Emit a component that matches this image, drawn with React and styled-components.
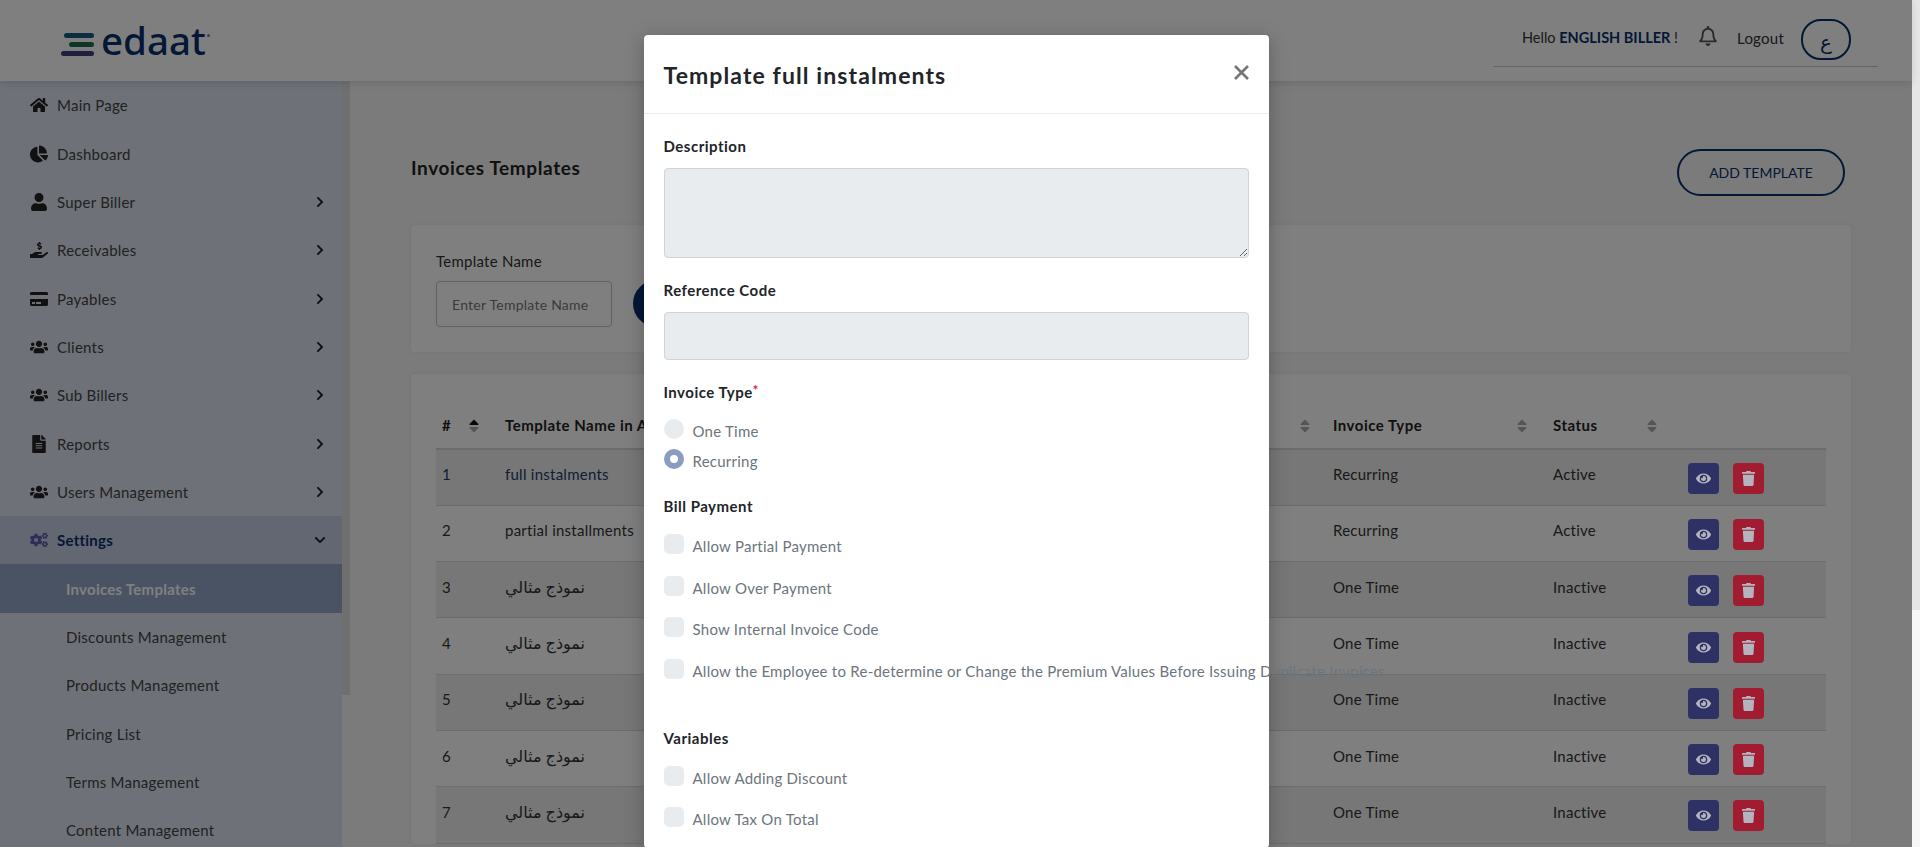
import React from "react";
import styled, { createGlobalStyle } from "styled-components";
import {
  FaHome, FaChartPie, FaUser, FaHandHoldingUsd, FaCreditCard, FaUsers, FaFileAlt, FaCogs,
  FaChevronRight, FaChevronDown, FaEye, FaTrash, FaSortUp, FaSortDown, FaRegBell,
} from "react-icons/fa";

const FONT = `"Lato", "DejaVu Sans", sans-serif`;

const Global = createGlobalStyle`
  html, body { margin: 0; padding: 0; height: 100%; overflow: hidden; background: #fff; }
  body { font-family: ${FONT}; font-size: 15px; letter-spacing: .25px; color: #212529; }
  * { box-sizing: border-box; }
`;

const Root = styled.div`display: flex; height: 847px; overflow: hidden;`;
const PageArea = styled.div`position: relative; flex: 1; min-width: 0; display: flex; flex-direction: column; background: #f6f6f6;`;
const PageScroll = styled.div`width: 8px; background: #f7f7f7; flex: none;`;
const PageThumb = styled.div`height: 610px; background: #e6e6e6;`;

const Header = styled.header`height: 81px; flex: none; background: #fff; box-shadow: 0 2px 8px rgba(0,0,0,.12); display: flex; justify-content: space-between; position: relative; z-index: 2;`;
const Logo = styled.div`display: flex; align-items: flex-start; padding: 0 0 0 61px; position: relative;`;
const LogoMark = styled.svg`width: 34px; height: 24px; margin-top: 33px; flex: none;`;
const LogoWord = styled.span`font-family: "Noto Sans", sans-serif; font-size: 38.5px; font-weight: 500; line-height: 48px; margin: 16px 0 0 6px; color: #0a2f6c; letter-spacing: 0;`;
const LogoDot = styled.span`width: 3px; height: 3px; border-radius: 50%; background: #6d84a8; margin: 34px 0 0 1px;`;
const UserBar = styled.div`width: 385px; height: 67px; margin-right: 34px; padding-left: 29px; border-bottom: 1px solid #c9c9c9; display: flex; align-items: flex-start; color: #333;`;
const Hello = styled.span`margin-top: 29px; line-height: 18px; font-size: 14.5px; letter-spacing: 0;`;
const Strong = styled.b`color: #0a2f6c; font-weight: 700;`;
const BellWrap = styled.span`margin: 26px 0 0 20px; font-size: 20px; line-height: 20px; color: #555;`;
const Logout = styled.span`margin: 29px 0 0 19px; line-height: 18px;`;
const Lang = styled.span`width: 50px; height: 41px; border: 2px solid #0a2f6c; border-radius: 20px; margin: 19px 0 0 17px; display: flex; align-items: center; justify-content: center; color: #0a2f6c; font-size: 20px; padding-top: 4px;`;

const Body = styled.div`display: flex; flex: 1; min-height: 0;`;
const SideWrap = styled.div`width: 350px; flex: none; display: flex;`;
const Sidebar = styled.nav`width: 342px; background: #dde2f0; overflow: hidden;`;
const SideScroll = styled.div`width: 8px; background: #f6f6f6;`;
const SideThumb = styled.div`height: 614px; background: #dedede;`;
const Item = styled.div`
  height: 48.35px; display: flex; align-items: center; padding-left: ${p => (p.$sub ? 66 : 30)}px; padding-right: 16px;
  background: ${p => (p.$active ? "#94a6c6" : p.$open ? "#c6cee2" : "transparent")};
  color: ${p => (p.$active ? "#fff" : p.$open ? "#0a2f6c" : "#444")};
  font-weight: ${p => (p.$active || p.$open ? 700 : 400)};
`;
const ItemIcon = styled.span`width: 27px; flex: none; font-size: 18px; line-height: 0; color: ${p => (p.$open ? "#5a5fb0" : "#222")};`;
const ItemText = styled.span`flex: 1;`;
const Caret = styled.span`font-size: 12px; line-height: 0; color: #222;`;

const Main = styled.main`flex: 1; min-width: 0; padding: 68px 61px 0;`;
const TitleRow = styled.div`display: flex; justify-content: space-between; align-items: flex-start; margin-bottom: 29px;`;
const PageTitle = styled.h1`margin: 8px 0 0; font-size: 19px; line-height: 22px; font-weight: 700; color: #222; letter-spacing: .6px;`;
const AddBtn = styled.button`width: 168px; height: 47px; border: 2px solid #0a2f6c; border-radius: 24px; background: none; color: #0a2f6c; font: 400 14px ${FONT}; margin-right: 6px;`;
const Card = styled.section`background: #fff; border-radius: 4px; box-shadow: 0 0 4px rgba(0,0,0,.06); padding: ${p => p.$pad}; margin-top: ${p => p.$mt || 0}px;`;
const SearchRow = styled.div`display: flex; align-items: flex-end; gap: 21px;`;
const Field = styled.div`display: flex; flex-direction: column;`;
const FilterLabel = styled.label`line-height: 18px; margin-bottom: 11px; color: #333;`;
const FilterInput = styled.div`width: 176px; height: 46px; border: 1px solid #c4c4c4; border-radius: 4px; padding: 0 15px; display: flex; align-items: center; color: #777; font-size: 14px;`;
const SearchBtn = styled.div`width: 150px; height: 47px; border-radius: 24px; background: #0a2f6c;`;

const Table = styled.table`width: 100%; border-collapse: collapse; table-layout: fixed;`;
const Th = styled.th`height: 57px; padding: 10px 6px 0; text-align: left; font-weight: 700; font-size: 15px; letter-spacing: .5px; color: #222; border-bottom: 2px solid #d6d6d6; white-space: nowrap; overflow: hidden;`;
const ThInner = styled.div`display: flex; justify-content: space-between; align-items: center; padding-right: ${p => p.$pr || 14}px;`;
const Sort = styled.span`position: relative; width: 12px; height: 16px; flex: none; display: block; font-size: 16px; color: #aaa;`;
const SortPart = styled.span`position: absolute; left: 1px; top: 1px; line-height: 0; color: ${p => (p.$dark ? "#111" : "inherit")};`;
const Tr = styled.tr`height: 56.3px; background: ${p => (p.$odd ? "#eee" : "transparent")};`;
const Td = styled.td`padding: 0 6px 6px; border-bottom: 1px solid #d8d8d8; color: ${p => (p.$navy ? "#1c3d6c" : "#333")}; white-space: nowrap; overflow: hidden;`;
const ArabicText = styled.span`font-size: 16px; letter-spacing: 0;`;
const Actions = styled.td`padding: 2px 0 0 11px; border-bottom: 1px solid #d8d8d8;`;
const ActionRow = styled.div`display: flex; gap: 14px;`;
const ActionBtn = styled.span`position: relative; z-index: 11; width: 31px; height: 31px; border-radius: 4px; display: flex; align-items: center; justify-content: center; font-size: 15px; color: #b4b4c0; background: ${p => (p.$danger ? "#a11c31" : "#2e3163")};`;

const Overlay = styled.div`position: absolute; inset: 0; background: rgba(0,0,0,.5); z-index: 10; overflow: hidden;`;
const Modal = styled.div`width: 625px; margin: 35px auto 0; background: #fff; border-radius: 4px; box-shadow: 0 4px 20px rgba(0,0,0,.25);`;
const ModalHead = styled.div`height: 79px; padding: 0 20px; border-bottom: 1px solid #e9ecef; display: flex; justify-content: space-between; align-items: flex-start;`;
const ModalTitle = styled.h2`margin: 27px 0 0; font-size: 23px; line-height: 26px; font-weight: 700; letter-spacing: 1.1px; color: #212529;`;
const CloseIcon = styled.svg`width: 15px; height: 15px; margin-top: 30px; stroke: #777; stroke-width: 2.6;`;
const ModalBody = styled.div`padding: 23px 20px 0;`;
const Label = styled.div`font-weight: 700; font-size: 15px; line-height: 18px; letter-spacing: .5px; color: #212529; margin: ${p => p.$m || "0"};`;
const Req = styled.span`color: #e3142c; font-size: 13px; line-height: 0; position: relative; top: -3px;`;
const TextArea = styled.textarea`display: block; width: 100%; height: 90px; margin: 13px 0 0; background: #e9ecef; border: 1px solid #ced4da; border-radius: 4px; resize: vertical; outline: none;`;
const TextInput = styled.div`height: 48px; margin-top: 13px; background: #e9ecef; border: 1px solid #ced4da; border-radius: 4px;`;
const Check = styled.div`display: flex; align-items: flex-start; height: ${p => p.$h}px; white-space: nowrap; color: #6c757d;`;
const Box = styled.span`
  width: 20px; height: 20px; flex: none; margin-right: 9px; background: ${p => (p.$on ? "#8a9cc0" : "#e9ecef")};
  border-radius: ${p => (p.$round ? "50%" : "5px")};
  display: flex; align-items: center; justify-content: center;
`;
const Dot = styled.span`width: 8px; height: 8px; border-radius: 50%; background: #fff;`;
const CheckText = styled.span`line-height: 18px; margin-top: ${p => p.$mt || 3}px;`;

const Arabic = "نموذج مثالي";
const rows = [
  [1, "full instalments", "Recurring", "Active"],
  [2, "partial installments", "Recurring", "Active"],
  [3, Arabic, "One Time", "Inactive"],
  [4, Arabic, "One Time", "Inactive"],
  [5, Arabic, "One Time", "Inactive"],
  [6, Arabic, "One Time", "Inactive"],
  [7, Arabic, "One Time", "Inactive"],
];
const nav = [
  [FaHome, "Main Page", false],
  [FaChartPie, "Dashboard", false],
  [FaUser, "Super Biller", true],
  [FaHandHoldingUsd, "Receivables", true],
  [FaCreditCard, "Payables", true],
  [FaUsers, "Clients", true],
  [FaUsers, "Sub Billers", true],
  [FaFileAlt, "Reports", true],
  [FaUsers, "Users Management", true],
];
const subs = ["Discounts Management", "Products Management", "Pricing List", "Terms Management", "Content Management"];

const SortIcon = ({ on }) => (
  <Sort>
    <SortPart $dark={on}><FaSortUp /></SortPart>
    <SortPart><FaSortDown /></SortPart>
  </Sort>
);

const Name = ({ text }) => (text === Arabic ? <ArabicText>{text}</ArabicText> : text);

export default function App() {
  return (
    <Root>
      <Global />
      <PageArea>
        <Header>
          <Logo>
            <LogoMark viewBox="0 0 34 24">
              <rect x="3" y="0" width="30" height="5" rx="2.5" fill="#125f82" />
              <rect x="8" y="9" width="25" height="5" rx="2.5" fill="#1f6e4e" />
              <rect x="0" y="18" width="33" height="5" rx="2.5" fill="#3f3f82" />
            </LogoMark>
            <LogoWord>edaat</LogoWord>
            <LogoDot />
          </Logo>
          <UserBar>
            <Hello>Hello <Strong>ENGLISH BILLER</Strong> !</Hello>
            <BellWrap><FaRegBell /></BellWrap>
            <Logout>Logout</Logout>
            <Lang>ع</Lang>
          </UserBar>
        </Header>
        <Body>
          <SideWrap>
            <Sidebar>
              {nav.map(([Icon, label, more]) => (
                <Item key={label}>
                  <ItemIcon><Icon /></ItemIcon>
                  <ItemText>{label}</ItemText>
                  {more && <Caret><FaChevronRight /></Caret>}
                </Item>
              ))}
              <Item $open>
                <ItemIcon $open><FaCogs /></ItemIcon>
                <ItemText>Settings</ItemText>
                <Caret><FaChevronDown /></Caret>
              </Item>
              <Item $sub $active>Invoices Templates</Item>
              {subs.map(s => <Item $sub key={s}>{s}</Item>)}
            </Sidebar>
            <SideScroll><SideThumb /></SideScroll>
          </SideWrap>
          <Main>
            <TitleRow>
              <PageTitle>Invoices Templates</PageTitle>
              <AddBtn>ADD TEMPLATE</AddBtn>
            </TitleRow>
            <Card $pad="27px 25px 25px">
              <SearchRow>
                <Field>
                  <FilterLabel>Template Name</FilterLabel>
                  <FilterInput>Enter Template Name</FilterInput>
                </Field>
                <SearchBtn />
              </SearchRow>
            </Card>
            <Card $pad="18px 25px 0" $mt={22}>
              <Table>
                <colgroup>
                  <col width="63" />
                  <col width="414" />
                  <col width="414" />
                  <col width="220" />
                  <col width="130" />
                  <col width="149" />
                </colgroup>
                <thead>
                  <tr>
                    <Th><ThInner $pr={16}># <SortIcon on /></ThInner></Th>
                    <Th><ThInner>Template Name in Arabic <SortIcon /></ThInner></Th>
                    <Th><ThInner $pr={13}>Template Name in English <SortIcon /></ThInner></Th>
                    <Th><ThInner $pr={16}>Invoice Type <SortIcon /></ThInner></Th>
                    <Th><ThInner $pr={16}>Status <SortIcon /></ThInner></Th>
                    <Th />
                  </tr>
                </thead>
                <tbody>
                  {rows.map((r, i) => (
                    <Tr key={r[0]} $odd={i % 2 === 0}>
                      <Td $navy={i === 0}>{r[0]}</Td>
                      <Td $navy={i === 0}><Name text={r[1]} /></Td>
                      <Td><Name text={r[1]} /></Td>
                      <Td>{r[2]}</Td>
                      <Td>{r[3]}</Td>
                      <Actions>
                        <ActionRow>
                          <ActionBtn><FaEye /></ActionBtn>
                          <ActionBtn $danger><FaTrash /></ActionBtn>
                        </ActionRow>
                      </Actions>
                    </Tr>
                  ))}
                </tbody>
              </Table>
            </Card>
          </Main>
        </Body>
        <Overlay>
          <Modal>
            <ModalHead>
              <ModalTitle>Template full instalments</ModalTitle>
              <CloseIcon viewBox="0 0 15 15"><line x1="1" y1="1" x2="14" y2="14" /><line x1="14" y1="1" x2="1" y2="14" /></CloseIcon>
            </ModalHead>
            <ModalBody>
              <Label>Description</Label>
              <TextArea readOnly />
              <Label $m="23px 0 0">Reference Code</Label>
              <TextInput />
              <Label $m="23px 0 18px">Invoice Type<Req>*</Req></Label>
              <Check $h={30}><Box $round /><CheckText $mt={3}>One Time</CheckText></Check>
              <Check $h={48}><Box $round $on><Dot /></Box><CheckText $mt={3}>Recurring</CheckText></Check>
              <Label $m="0 0 19px">Bill Payment</Label>
              <Check $h={42}><Box /><CheckText>Allow Partial Payment</CheckText></Check>
              <Check $h={41}><Box /><CheckText>Allow Over Payment</CheckText></Check>
              <Check $h={42}><Box /><CheckText>Show Internal Invoice Code</CheckText></Check>
              <Check $h={70}><Box /><CheckText>Allow the Employee to Re-determine or Change the Premium Values Before Issuing Duplicate Invoices</CheckText></Check>
              <Label $m="0 0 19px">Variables</Label>
              <Check $h={41}><Box /><CheckText>Allow Adding Discount</CheckText></Check>
              <Check $h={41}><Box /><CheckText>Allow Tax On Total</CheckText></Check>
            </ModalBody>
          </Modal>
        </Overlay>
      </PageArea>
      <PageScroll><PageThumb /></PageScroll>
    </Root>
  );
}
